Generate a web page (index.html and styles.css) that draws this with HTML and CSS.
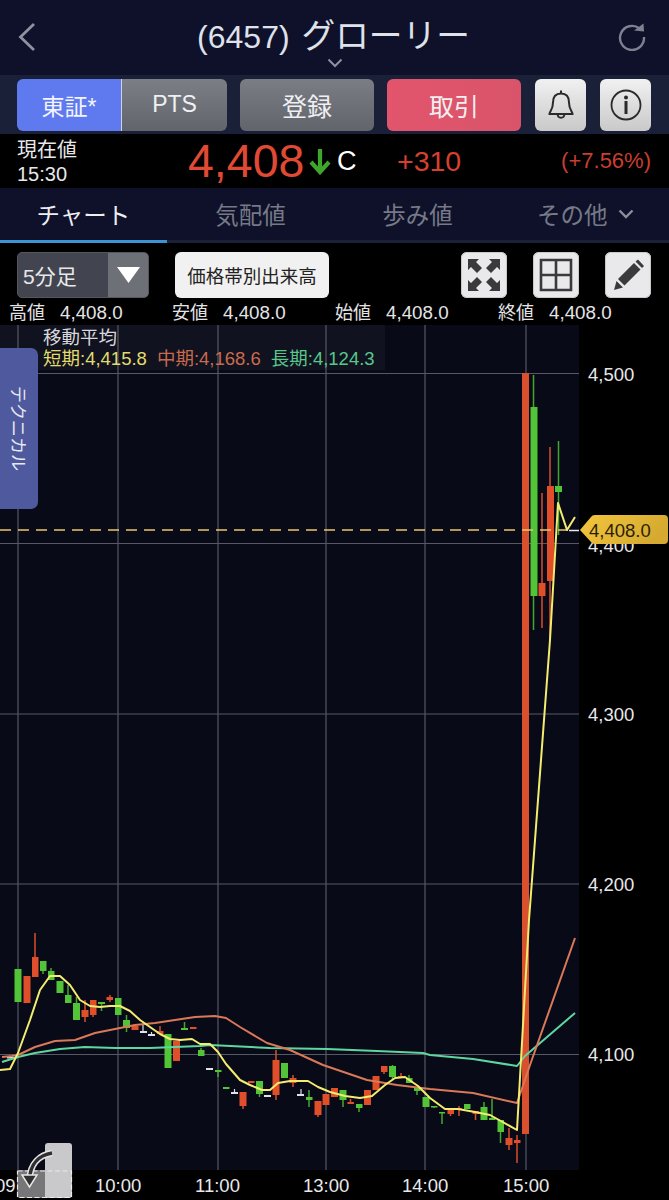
FILE: index.html
```html
<!DOCTYPE html>
<html lang="ja">
<head>
<meta charset="utf-8">
<title>グローリー</title>
<link rel="stylesheet" href="styles.css">
</head>
<body>
<div class="app">
  <header class="header">
    <svg class="back" viewBox="0 0 20 30" width="20" height="30"><path d="M17 2 L3.500 15 L17 28" fill="none" stroke="#8d91a0" stroke-width="2.800"/></svg>
    <h1 class="title"><span class="title-code">(6457)</span> <span class="title-name">グローリー</span></h1>
    <svg class="reload" viewBox="0 0 30 30" width="30" height="30"><path d="M23.500 6.500 A12 12 0 1 0 28 15" fill="none" stroke="#7d8190" stroke-width="2.400"/><path d="M18 8.500 L28 9.500 L27.500 1.500 Z" fill="#7d8190"/></svg>
    <svg class="chev" viewBox="0 0 16 10" width="16" height="10"><path d="M1.500 1.500 L8 8 L14.500 1.500" fill="none" stroke="#8d91a0" stroke-width="2"/></svg>
  </header>
  <nav class="actions">
    <div class="seg"><span class="seg-on">東証*</span><span class="seg-off">PTS</span></div>
    <button class="btn btn-gray">登録</button>
    <button class="btn btn-red">取引</button>
    <button class="icon-btn"><svg viewBox="0 0 32 36" width="32" height="36"><path d="M4.500 27 C4.500 24.500 8 23 8 15.500 C8 9.500 11 6.500 16 6.500 C21 6.500 24 9.500 24 15.500 C24 23 27.500 24.500 27.500 27 Z M16 3.500 V6.500 M12.500 27 C13 32 19 32 19.500 27" fill="none" stroke="#2a2a2a" stroke-width="2"/></svg></button>
    <button class="icon-btn"><svg viewBox="0 0 32 32" width="32" height="32"><circle cx="16" cy="16" r="14.500" fill="none" stroke="#2a2a2a" stroke-width="1.800"/><circle cx="16" cy="8.500" r="2" fill="#2a2a2a"/><path d="M16 12 V25" stroke="#2a2a2a" stroke-width="3"/></svg></button>
  </nav>
  <section class="quote">
    <div class="q-label"><div>現在値</div><div>15:30</div></div>
    <div class="q-price">4,408</div>
    <svg class="q-arrow" viewBox="0 0 24 28" width="24" height="28"><path d="M12 2 V24 M3 15 L12 25 L21 15" fill="none" stroke="#3ea52d" stroke-width="4.200"/></svg>
    <div class="q-c">C</div>
    <div class="q-diff">+310</div>
    <div class="q-pct">(+7.56%)</div>
  </section>
  <nav class="tabs">
    <div class="tab tab-on">チャート</div>
    <div class="tab">気配値</div>
    <div class="tab">歩み値</div>
    <div class="tab tab-more">その他<svg viewBox="0 0 16 10" width="16" height="10"><path d="M1.500 1.500 L8 8 L14.500 1.500" fill="none" stroke="#8b8e9c" stroke-width="2.400"/></svg></div>
  </nav>
  <section class="tools">
    <div class="sel"><span class="sel-text">5分足</span><span class="sel-drop"><svg viewBox="0 0 23 16" width="23" height="16"><path d="M0 0 H23 L11.500 16 Z" fill="#fff"/></svg></span></div>
    <button class="vol">価格帯別出来高</button>
    <div class="tool-icons">
      <button class="tool"><svg viewBox="0 0 34 34" width="34" height="34"><g fill="#3a3a3c"><path d="M1 1 H12 L9 4 L15 10 L10 15 L4 9 L1 12 Z"/><path d="M33 1 H22 L25 4 L19 10 L24 15 L30 9 L33 12 Z"/><path d="M1 33 H12 L9 30 L15 24 L10 19 L4 25 L1 22 Z"/><path d="M33 33 H22 L25 30 L19 24 L24 19 L30 25 L33 22 Z"/></g></svg></button>
      <button class="tool"><svg viewBox="0 0 34 34" width="34" height="34"><path d="M2 2 H32 V32 H2 Z M17 2 V32 M2 17 H32" fill="none" stroke="#3a3a3c" stroke-width="2.600"/></svg></button>
      <button class="tool"><svg viewBox="0 0 34 34" width="34" height="34"><path d="M3 32 L5.500 23 L12 29.500 Z M7 21 L23 5 L29.500 11.500 L13.500 27.500 Z M24.500 3.500 L27 1.500 L33 8 L31 10 Z" fill="#3a3a3c"/></svg></button>
    </div>
  </section>
  <section class="ohlc">
    <div class="ohlc-item"><span>高値</span><span class="ohlc-val">4,408.0</span></div>
    <div class="ohlc-item"><span>安値</span><span class="ohlc-val">4,408.0</span></div>
    <div class="ohlc-item"><span>始値</span><span class="ohlc-val">4,408.0</span></div>
    <div class="ohlc-item"><span>終値</span><span class="ohlc-val">4,408.0</span></div>
  </section>
  <section class="chart">
    <svg class="plot" viewBox="0 325 669 875" width="669" height="875">
      <rect x="0" y="325" width="579" height="845" fill="#080a18"/>
      <rect x="0" y="325" width="385" height="45" fill="#10121f"/>
      <g stroke="#565864" stroke-width="1.200">
        <path d="M0 373.500 H579 M0 543.500 H579 M0 714 H579 M0 884 H579 M0 1054.500 H579"/>
        <path d="M18 325 V1170 M118 325 V1170 M218 325 V1170 M326 325 V1170 M425 325 V1170 M526 325 V1170"/>
      </g>
      <g stroke="#d84f2e" stroke-width="1.500">
        <path d="M35 933V957M85 1000V1022M93 1015V1017M110 995V1002M160 1026V1034M243 1106V1109M276 1050V1100M293 1075V1087M318 1115V1117M350.500 1099V1103M384 1072V1074M401 1073V1078M450.500 1114V1116M459 1106V1116M475.500 1114V1120M509 1128V1150M517 1135V1163M542 493V628M550 447V640"/>
      </g>
      <g stroke="#45a62f" stroke-width="1.500">
        <path d="M18 969V1002M43 971V974M51 968V971M68 985V995M76.500 997V1003M101.500 1002V1011M126.500 1015V1032M184.500 1022V1028M201 1048V1050M218 1070V1077M259.500 1094V1097M309 1090V1107M343 1100V1107M359 1108V1112M392.500 1065V1079M409 1075V1078M417 1091V1095M434 1106V1108M442 1112V1124M484 1102V1120M492 1099V1119M500.500 1132V1143M533.500 375V630M558.500 441V535"/>
      </g>
      <g stroke="#d8dbe6" stroke-width="1.200">
        <path d="M143 1025V1031M151.500 1032V1034M234.500 1089V1092M301 1089V1094"/>
      </g>
      <g fill="#e0e2ea">
        <rect x="7" y="1057" width="7" height="1.500"/>
        <rect x="140" y="1031" width="7" height="2"/>
        <rect x="148" y="1034" width="7" height="2"/>
        <rect x="206" y="1068" width="7" height="2"/>
        <rect x="231" y="1092" width="7" height="2"/>
        <rect x="264" y="1095" width="7" height="2"/>
        <rect x="297" y="1094" width="7" height="2"/>
      </g>
      <g fill="#e04e2a">
        <rect x="23.500" y="976" width="7" height="27"/>
        <rect x="32" y="957" width="6.500" height="20"/>
        <rect x="81.500" y="1010" width="7" height="7"/>
        <rect x="90" y="1000" width="6.500" height="15"/>
        <rect x="106.500" y="997" width="6.500" height="3"/>
        <rect x="131.500" y="1026" width="7" height="4"/>
        <rect x="157" y="1031" width="6.500" height="3"/>
        <rect x="173" y="1041" width="7" height="20"/>
        <rect x="190" y="1027" width="6.500" height="2"/>
        <rect x="239.500" y="1092" width="7" height="14"/>
        <rect x="248" y="1081" width="6.500" height="2"/>
        <rect x="272.500" y="1060" width="7" height="35"/>
        <rect x="289.500" y="1078" width="7" height="5"/>
        <rect x="314.500" y="1101" width="7" height="14"/>
        <rect x="322.500" y="1094" width="7" height="11"/>
        <rect x="331" y="1088" width="7" height="9"/>
        <rect x="347.500" y="1102" width="6.500" height="2"/>
        <rect x="364" y="1090" width="7" height="15"/>
        <rect x="372.500" y="1076" width="7" height="14"/>
        <rect x="381" y="1066" width="6.500" height="6"/>
        <rect x="398" y="1076" width="6" height="2"/>
        <rect x="447.500" y="1109" width="6.500" height="5"/>
        <rect x="456" y="1108" width="6" height="2"/>
        <rect x="472.500" y="1111" width="6.500" height="3"/>
        <rect x="505.500" y="1138" width="7" height="7"/>
        <rect x="514" y="1140" width="6.500" height="3"/>
        <rect x="522" y="373" width="7" height="761" fill="#d9502e"/>
        <rect x="538.500" y="583" width="7" height="13"/>
        <rect x="547" y="486" width="7" height="95"/>
      </g>
      <g fill="#52c438">
        <rect x="14.500" y="969" width="7" height="33"/>
        <rect x="40" y="961" width="6.500" height="10"/>
        <rect x="48" y="971" width="6.500" height="9"/>
        <rect x="56.500" y="981" width="7" height="12"/>
        <rect x="65" y="995" width="6.500" height="8"/>
        <rect x="73" y="1003" width="7" height="17"/>
        <rect x="98" y="1002" width="7" height="2"/>
        <rect x="115" y="998" width="6.500" height="17"/>
        <rect x="123" y="1020" width="7" height="8"/>
        <rect x="164.500" y="1034" width="7" height="34"/>
        <rect x="181" y="1028" width="7" height="2"/>
        <rect x="198" y="1050" width="6.500" height="6"/>
        <rect x="215" y="1070" width="6.500" height="2"/>
        <rect x="223" y="1087" width="6.500" height="2"/>
        <rect x="256" y="1081" width="7" height="13"/>
        <rect x="281" y="1063" width="7" height="15"/>
        <rect x="306" y="1097" width="6.500" height="3"/>
        <rect x="339.500" y="1090" width="7" height="10"/>
        <rect x="356" y="1104" width="6.500" height="4"/>
        <rect x="389" y="1066" width="7" height="11"/>
        <rect x="406" y="1078" width="6.500" height="5"/>
        <rect x="414" y="1088" width="6.500" height="3"/>
        <rect x="422.500" y="1097" width="7" height="10"/>
        <rect x="431" y="1106" width="6.500" height="1.500"/>
        <rect x="439" y="1112" width="6" height="1.500"/>
        <rect x="464" y="1104" width="6.500" height="5"/>
        <rect x="480.500" y="1107" width="7" height="13"/>
        <rect x="489" y="1118" width="6.500" height="2"/>
        <rect x="497.500" y="1120" width="6.500" height="12"/>
        <rect x="530.500" y="407" width="7" height="189"/>
        <rect x="555" y="486" width="7" height="6"/>
      </g>
      <path d="M0 530 H568" stroke="#ecc669" stroke-width="1.500" stroke-dasharray="11 7" fill="none"/>
      <path d="M569 530.500 H579" stroke="#e8e8ea" stroke-width="1.500" fill="none"/>
      <polyline class="ma" stroke="#5fd6a0" points="2,1062 18,1057 35,1053 60,1049 85,1047 115,1048 150,1048 200,1046 210,1045 270,1048 327,1049 377,1051 423,1053 430,1055 473,1059 517,1066 525,1056 575,1013"/>
      <polyline class="ma" stroke="#d97958" points="2,1057 12,1056 18,1055 35,1047 55,1041 75,1040 95,1033 115,1029 135,1025 155,1023 175,1020 195,1017 215,1016 226,1018 240,1027 267,1043 290,1050 323,1065 367,1080 397,1085 430,1089 473,1093 517,1103 530,1065 575,938"/>
      <polyline class="ma" stroke="#f3ec6e" points="0,1070 10,1069 18,1053 30,1020 40,990 50,976 60,976 70,985 80,1000 90,1006 100,1007 110,1006 120,1006 130,1011 140,1020 150,1027 160,1034 170,1039 180,1040 192,1039 200,1044 210,1044 218,1052 226,1064 240,1080 250,1085 262,1090 270,1090 278,1083 290,1081 308,1081 318,1087 330,1092 345,1096 360,1098 372,1096 385,1085 395,1078 405,1077 418,1086 430,1098 445,1109 458,1109 475,1112 490,1115 517,1130 529,920 550,640 558,503 567,530 575,517"/>
      <g class="axis-y">
        <text x="588" y="381">4,500</text>
        <text x="588" y="552">4,400</text>
        <text x="588" y="721">4,300</text>
        <text x="588" y="891">4,200</text>
        <text x="588" y="1061">4,100</text>
      </g>
      <defs>
        <linearGradient id="tagfill" x1="0" y1="0" x2="1" y2="0.300"><stop offset="0" stop-color="#f2c63e"/><stop offset="1" stop-color="#d6aa30"/></linearGradient>
      </defs>
      <path class="tag" fill="url(#tagfill)" d="M580 530 L591 517 Q592 515 595 515 H664 Q668 515 668 519 V540 Q668 544 664 544 H595 Q592 544 591 542 Z"/>
      <text class="tag-text" x="589" y="537">4,408.0</text>
      <g class="axis-x">
        <text x="-5" y="1192">09:00</text>
        <text x="95" y="1192">10:00</text>
        <text x="195" y="1192">11:00</text>
        <text x="303" y="1192">13:00</text>
        <text x="402" y="1192">14:00</text>
        <text x="503" y="1192">15:00</text>
      </g>
      <g>
        <path d="M45 1170 V1146 Q45 1143 48 1143 H69 Q72 1143 72 1146 V1195 Q72 1198 69 1198 H45 Z" fill="#c9c9cb"/>
        <path d="M45 1170 H20 Q17 1170 17 1173 V1195 Q17 1198 20 1198 H45 Z" fill="#77777a"/>
        <path d="M17.500 1171 H71.500 V1197.500 H17.500 Z" stroke="#ececec" stroke-width="1.200" stroke-dasharray="5 2.500" fill="none"/>
        <path d="M52 1153 C40 1155 30 1163 29.500 1180" fill="none" stroke="#e6e6e6" stroke-width="6.500"/>
        <path d="M52 1153 C40 1155 30 1163 29.500 1180" fill="none" stroke="#2f2f31" stroke-width="3.500"/>
        <path d="M22 1175 H37 L29.500 1187 Z" fill="#2f2f31" stroke="#e6e6e6" stroke-width="1.500"/>
      </g>
    </svg>
    <div class="ma-legend">
      <div class="ma-title">移動平均</div>
      <div class="ma-values"><span class="ma-s">短期:4,415.8</span><span class="ma-m">中期:4,168.6</span><span class="ma-l">長期:4,124.3</span></div>
    </div>
    <div class="tech"><span>テクニカル</span></div>
  </section>
</div>
</body>
</html>
```

FILE: styles.css
```css
* { box-sizing: border-box; }
html, body { margin: 0; padding: 0; background: #000; }
body { font-family: "Liberation Sans", "Noto Sans CJK JP", sans-serif; color: #fff; }
.app { width: 669px; height: 1200px; overflow: hidden; display: flex; flex-direction: column; }
button { font-family: inherit; border: 0; padding: 0; margin: 0; }

.header { position: relative; height: 75px; background: #0e1129; display: flex; align-items: center; justify-content: space-between; padding: 0 23px 2px 17px; flex: none; }
.title { margin: 0; font-weight: 400; color: #dfe2ea; line-height: 38px; white-space: nowrap; font-size: 32px; position: relative; left: 7px; }
.title-name { font-size: 33.700px; margin-left: 3px; }
.chev { position: absolute; left: 327px; top: 58px; }

.actions { height: 59px; background: #1a2038; display: flex; align-items: center; padding: 0 16px 0 17px; flex: none; }
.seg { width: 210px; height: 52px; display: flex; border-radius: 6px; overflow: hidden; font-size: 23px; margin-right: 13px; }
.seg-on { width: 105px; background: #5f79ee; display: flex; align-items: center; justify-content: center; border-right: 1px solid #cfd3e6; color: #f2f4ff; }
.seg-off { flex: 1; background: linear-gradient(#7c7e86, #62646c); display: flex; align-items: center; justify-content: center; color: #f0f0f2; }
.btn { width: 134px; height: 52px; border-radius: 6px; color: #f0f0f2; font-size: 25px; margin-right: 13px; }
.btn-gray { background: linear-gradient(#7b7d85, #62646c); }
.btn-red { background: linear-gradient(90deg, #e2556c, #d9546a); margin-right: 14px; }
.icon-btn { width: 51px; height: 52px; border-radius: 6px; background: linear-gradient(#f1f1f1, #c9c9c9); display: flex; align-items: center; justify-content: center; margin-right: 14px; }
.icon-btn:last-child { margin-right: 0; }

.quote { height: 54px; background: #000; flex: none; display: flex; align-items: center; padding-left: 17px; }
.q-label { width: 171px; font-size: 20px; line-height: 24px; color: #e8e8ea; padding-top: 2px; }
.q-price { font-size: 46.500px; color: #e04a34; width: 120px; flex: none; }
.q-arrow { flex: none; margin-right: 5px; }
.q-c { font-size: 27px; width: 60px; flex: none; color: #fff; }
.q-diff { font-size: 28.500px; color: #d8402e; flex: none; }
.q-pct { font-size: 22px; color: #c93e30; margin-left: auto; padding-right: 18px; white-space: nowrap; }

.tabs { height: 55px; background: #0e1129; display: grid; grid-template-columns: 167px 167px 167px 168px; flex: none; }
.tab { display: flex; align-items: center; justify-content: center; gap: 10px; font-size: 23.500px; color: #767987; border-bottom: 3px solid #1a2038; }
.tab-on { color: #eceef2; border-bottom-color: #3d94d4; }
.tab-more { justify-content: flex-start; padding-left: 36px; }

.tools { height: 57px; background: #000; display: flex; align-items: center; padding: 7px 18px 0 17px; flex: none; }
.sel { width: 132px; height: 46px; border-radius: 5px; background: #42454f; border: 1px solid #55575f; display: flex; overflow: hidden; margin-right: 26px; }
.sel-text { width: 90px; font-size: 21px; display: flex; align-items: center; padding-left: 5px; color: #e8e8ea; }
.sel-drop { flex: 1; background: #6e7078; display: flex; align-items: center; justify-content: center; }
.vol { width: 154px; height: 46px; border-radius: 6px; background: #f1f1f1; color: #222; font-size: 18.500px; }
.tool-icons { margin-left: auto; display: flex; gap: 26px; }
.tool { width: 46px; height: 46px; border-radius: 6px; background: #e9e9eb; box-shadow: inset 0 0 0 1px #c8c8ca; display: flex; align-items: center; justify-content: center; }

.ohlc { height: 25px; background: #000; display: flex; padding: 1px 0 0 9px; font-size: 18px; color: #e4e4e6; flex: none; align-items: center; }
.ohlc-item { width: 163px; flex: none; display: flex; align-items: baseline; gap: 15px; white-space: nowrap; line-height: 24px; }
.ohlc-val { font-size: 18.800px; }

.chart { position: relative; height: 875px; flex: none; }
.plot { display: block; }
.ma { fill: none; stroke-width: 2; stroke-linejoin: round; }
.axis-y text, .axis-x text { font-family: "Liberation Sans", sans-serif; fill: #e8e8ea; font-size: 18.500px; }
.tag-text { font-family: "Liberation Sans", sans-serif; font-size: 18.500px; fill: #2a1f05; }
.ma-legend { position: absolute; left: 43px; top: 2px; font-size: 18.500px; line-height: 21px; }
.ma-title { color: #d8d8dc; }
.ma-values { display: flex; gap: 10px; white-space: nowrap; }
.ma-s { color: #e2dc6c; }
.ma-m { color: #c96a4e; }
.ma-l { color: #58c78c; }
.tech { position: absolute; left: 0; top: 23px; width: 38px; height: 161px; background: #4f5a9e; border-radius: 0 7px 7px 0; display: flex; align-items: center; justify-content: center; }
.tech span { writing-mode: vertical-rl; text-orientation: sideways; font-size: 17px; color: #e8e9f2; }
```
